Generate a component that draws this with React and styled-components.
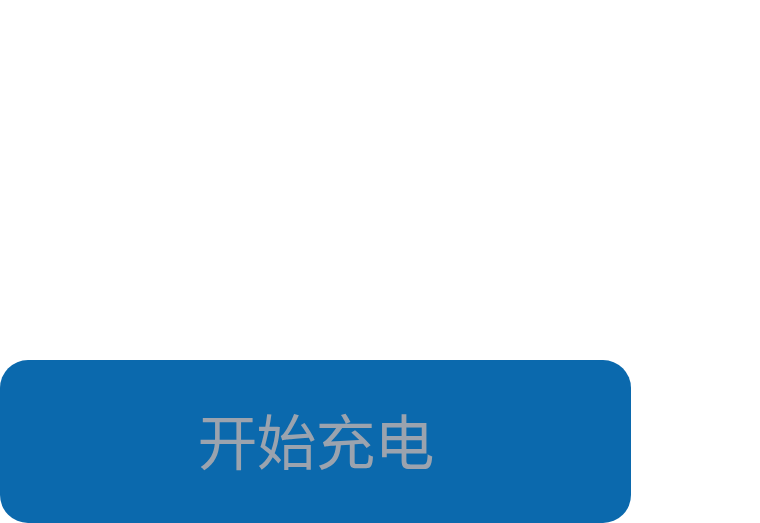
import React from 'react';
import styled, { createGlobalStyle } from 'styled-components';

const GlobalStyle = createGlobalStyle`
  html, body {
    margin: 0;
    padding: 0;
    background: #ffffff;
  }
`;

const StyledPage = styled.main`
  height: 523px;
  display: flex;
  flex-direction: column;
  justify-content: flex-end;
  align-items: flex-start;
  background: #ffffff;
`;

const StyledChargeButton = styled.button`
  width: 631px;
  height: 163px;
  margin: 0;
  padding: 0 0 6px;
  border: none;
  border-radius: 28px;
  background: #0b69ad;
  color: #9ba3ae;
  font-family: "Noto Sans CJK SC", "Noto Sans", sans-serif;
  font-size: 60px;
  font-weight: 400;
  letter-spacing: -1px;
  display: flex;
  align-items: center;
  justify-content: center;
  cursor: pointer;
`;

const App = () => (
  <>
    <GlobalStyle />
    <StyledPage>
      <StyledChargeButton type="button">开始充电</StyledChargeButton>
    </StyledPage>
  </>
);

export default App;
